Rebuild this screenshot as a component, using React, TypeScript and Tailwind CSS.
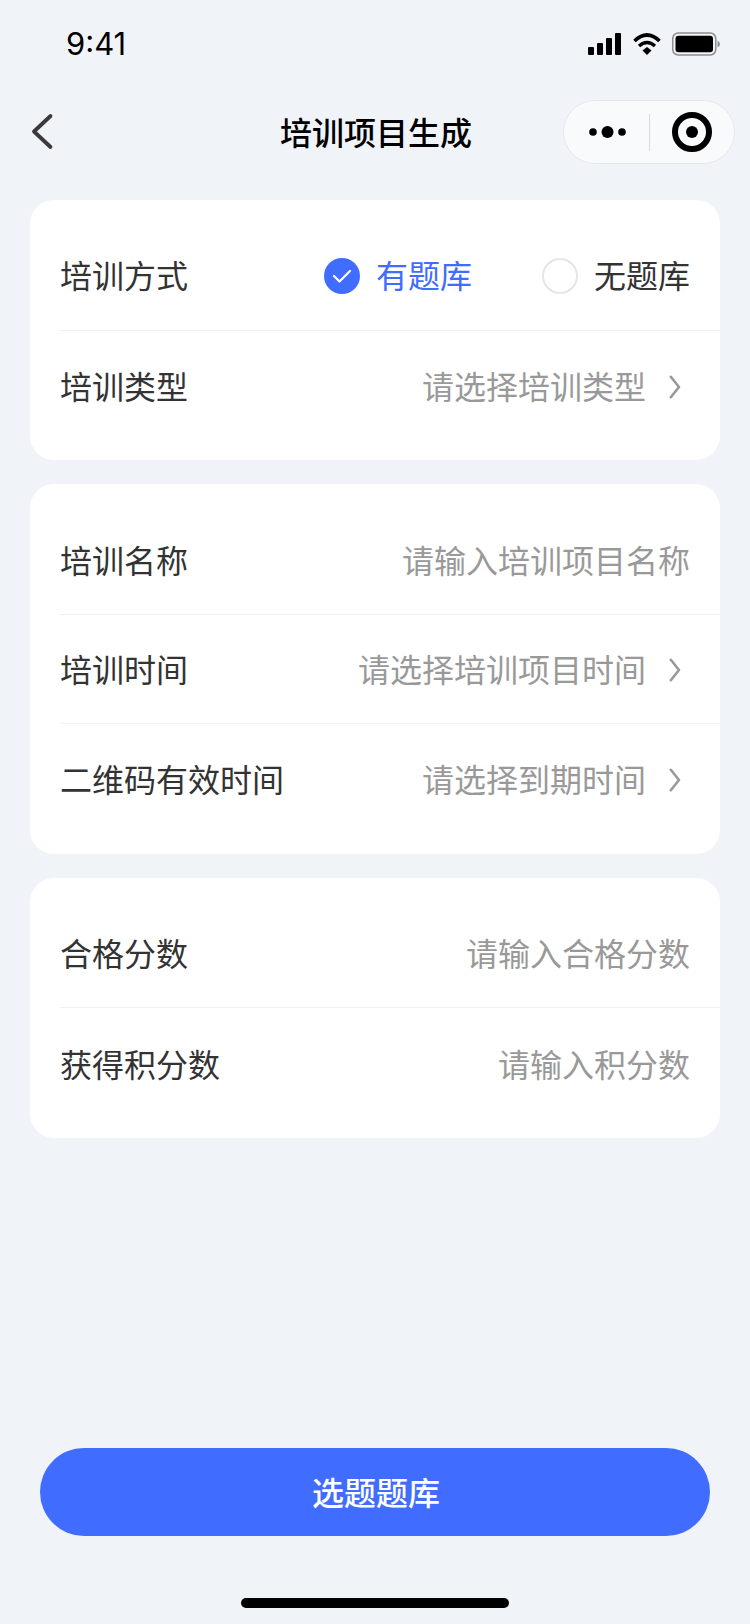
import React from "react";

const font = { fontFamily: '"Noto Sans CJK SC", "Noto Sans", sans-serif' };

function Chevron() {
  return (
    <svg width="12" height="24" viewBox="0 0 12 24" className="ml-[23px] mr-[9px] mt-[4px] shrink-0">
      <path d="M1.8 1.8 L10 12 L1.8 22.2" fill="none" stroke="#999" strokeWidth="2.6" strokeLinecap="round" strokeLinejoin="round" />
    </svg>
  );
}

function Row({ label, value, arrow, last, className, children }: { label: string; value?: string; arrow?: boolean; last?: boolean; className: string; children?: React.ReactNode }) {
  return (
    <div className={`ml-[30px] flex items-center pr-[30px] ${className} ${last ? "" : "border-b border-[#f0f0f0]"}`}>
      <span className="text-[32px] leading-[44px] text-[#333333] whitespace-nowrap">{label}</span>
      <div className="ml-auto flex items-center">
        {children}
        {value && <span className="text-[32px] leading-[44px] text-[#999999] whitespace-nowrap">{value}</span>}
        {arrow && <Chevron />}
      </div>
    </div>
  );
}

function Card({ children }: { children: React.ReactNode }) {
  return <div className="bg-white rounded-[24px] flex flex-col py-[20px]">{children}</div>;
}

export default function App() {
  return (
    <div className="relative w-[750px] h-[1624px] bg-[#f0f3f8] overflow-hidden flex flex-col" style={font}>
      {/* status bar */}
      <div className="h-[88px] flex items-start justify-between pl-[66px] pr-[30px] pt-[26px] shrink-0">
        <span className="text-[31px] leading-[36px] text-black" style={{ fontFamily: 'Inter, "Liberation Sans", sans-serif' }}>9:41</span>
        <svg width="132" height="24" viewBox="0 0 132 24" className="mt-[6px]">
          <rect x="0" y="15" width="6" height="8" rx="1" fill="#000" />
          <rect x="9" y="11" width="6" height="12" rx="1" fill="#000" />
          <rect x="18" y="6" width="6" height="17" rx="1" fill="#000" />
          <rect x="27" y="1" width="6" height="22" rx="1" fill="#000" />
          <path d="M46.5 9 Q59 -3 71.5 9" fill="none" stroke="#000" strokeWidth="3.6" />
          <path d="M51 14 Q59 7 67 14" fill="none" stroke="#000" strokeWidth="3.4" />
          <path d="M54.5 18.5 L59 15 L63.5 18.5 L59 23 Z" fill="#000" />
          <rect x="84.75" y="1" width="43" height="22" rx="5.5" fill="none" stroke="#8e8e8e" strokeWidth="1.5" />
          <rect x="87.5" y="3.75" width="37.5" height="16.5" rx="3" fill="#000" />
          <path d="M129.5 8.5 Q132 10 132 12 Q132 14 129.5 15.5 Z" fill="#8e8e8e" />
        </svg>
      </div>
      {/* nav bar */}
      <div className="relative h-[88px] flex items-center justify-center shrink-0">
        <svg width="24" height="40" viewBox="0 0 24 40" className="absolute left-[30px] top-[24px]">
          <path d="M20.5 4 L4 19.5 L20.5 35" fill="none" stroke="#3a3a3a" strokeWidth="3.8" strokeLinecap="round" strokeLinejoin="round" />
        </svg>
        <span className="text-[32px] leading-[44px] font-medium text-black ml-[2px] mb-[2px]">培训项目生成</span>
        <div className="absolute left-[563px] top-[12px] w-[172px] h-[64px] rounded-full bg-[#f9fafc] border border-[#e6e8ec] flex items-center">
          <svg width="40" height="14" viewBox="0 0 40 14" className="ml-[24px] shrink-0">
            <circle cx="5" cy="7" r="3.8" fill="#000" />
            <circle cx="19.5" cy="7" r="6" fill="#000" />
            <circle cx="34" cy="7" r="3.8" fill="#000" />
          </svg>
          <div className="ml-[21px] w-px h-[37px] bg-[#d9d9dc] shrink-0" />
          <svg width="40" height="40" viewBox="0 0 40 40" className="ml-[22px] shrink-0">
            <circle cx="20" cy="20" r="17" fill="none" stroke="#000" strokeWidth="6" />
            <circle cx="20" cy="20" r="6" fill="#000" />
          </svg>
        </div>
      </div>
      {/* form */}
      <div className="flex flex-col gap-[24px] mx-[30px] mt-[24px]">
        <Card>
          <Row label="培训方式" className="h-[111px] pb-[2px]">
            <div className="mt-[4px] w-[36px] h-[36px] rounded-full bg-[#406cff] flex items-center justify-center">
              <svg width="20" height="16" viewBox="0 0 20 16">
                <path d="M2 8 L7.5 13.5 L18 3" fill="none" stroke="#fff" strokeWidth="2.2" strokeLinecap="round" strokeLinejoin="round" />
              </svg>
            </div>
            <span className="ml-[16px] text-[32px] leading-[44px] text-[#406cff]">有题库</span>
            <div className="mt-[4px] ml-[70px] w-[36px] h-[36px] rounded-full bg-white border-[2px] border-[#e6e6e6]" />
            <span className="ml-[16px] text-[32px] leading-[44px] text-[#333333]">无题库</span>
          </Row>
          <Row label="培训类型" value="请选择培训类型" arrow last className="h-[109px] pb-[2px]" />
        </Card>
        <Card>
          <Row label="培训名称" value="请输入培训项目名称" className="h-[111px] pb-[1px]" />
          <Row label="培训时间" value="请选择培训项目时间" arrow className="h-[109px] pb-[2px]" />
          <Row label="二维码有效时间" value="请选择到期时间" arrow last className="h-[110px] pb-[2px]" />
        </Card>
        <Card>
          <Row label="合格分数" value="请输入合格分数" className="h-[110px] pb-[1px]" />
          <Row label="获得积分数" value="请输入积分数" last className="h-[110px]" />
        </Card>
      </div>
      {/* bottom */}
      <div className="mt-auto flex flex-col items-center">
        <div className="w-[670px] h-[88px] rounded-full bg-[#406cff] flex items-center justify-center">
          <span className="text-[32px] leading-[44px] font-medium text-white ml-[2px] mb-[2px]">选题题库</span>
        </div>
        <div className="mt-[62px] mb-[16px] w-[268px] h-[10px] rounded-full bg-black" />
      </div>
    </div>
  );
}
